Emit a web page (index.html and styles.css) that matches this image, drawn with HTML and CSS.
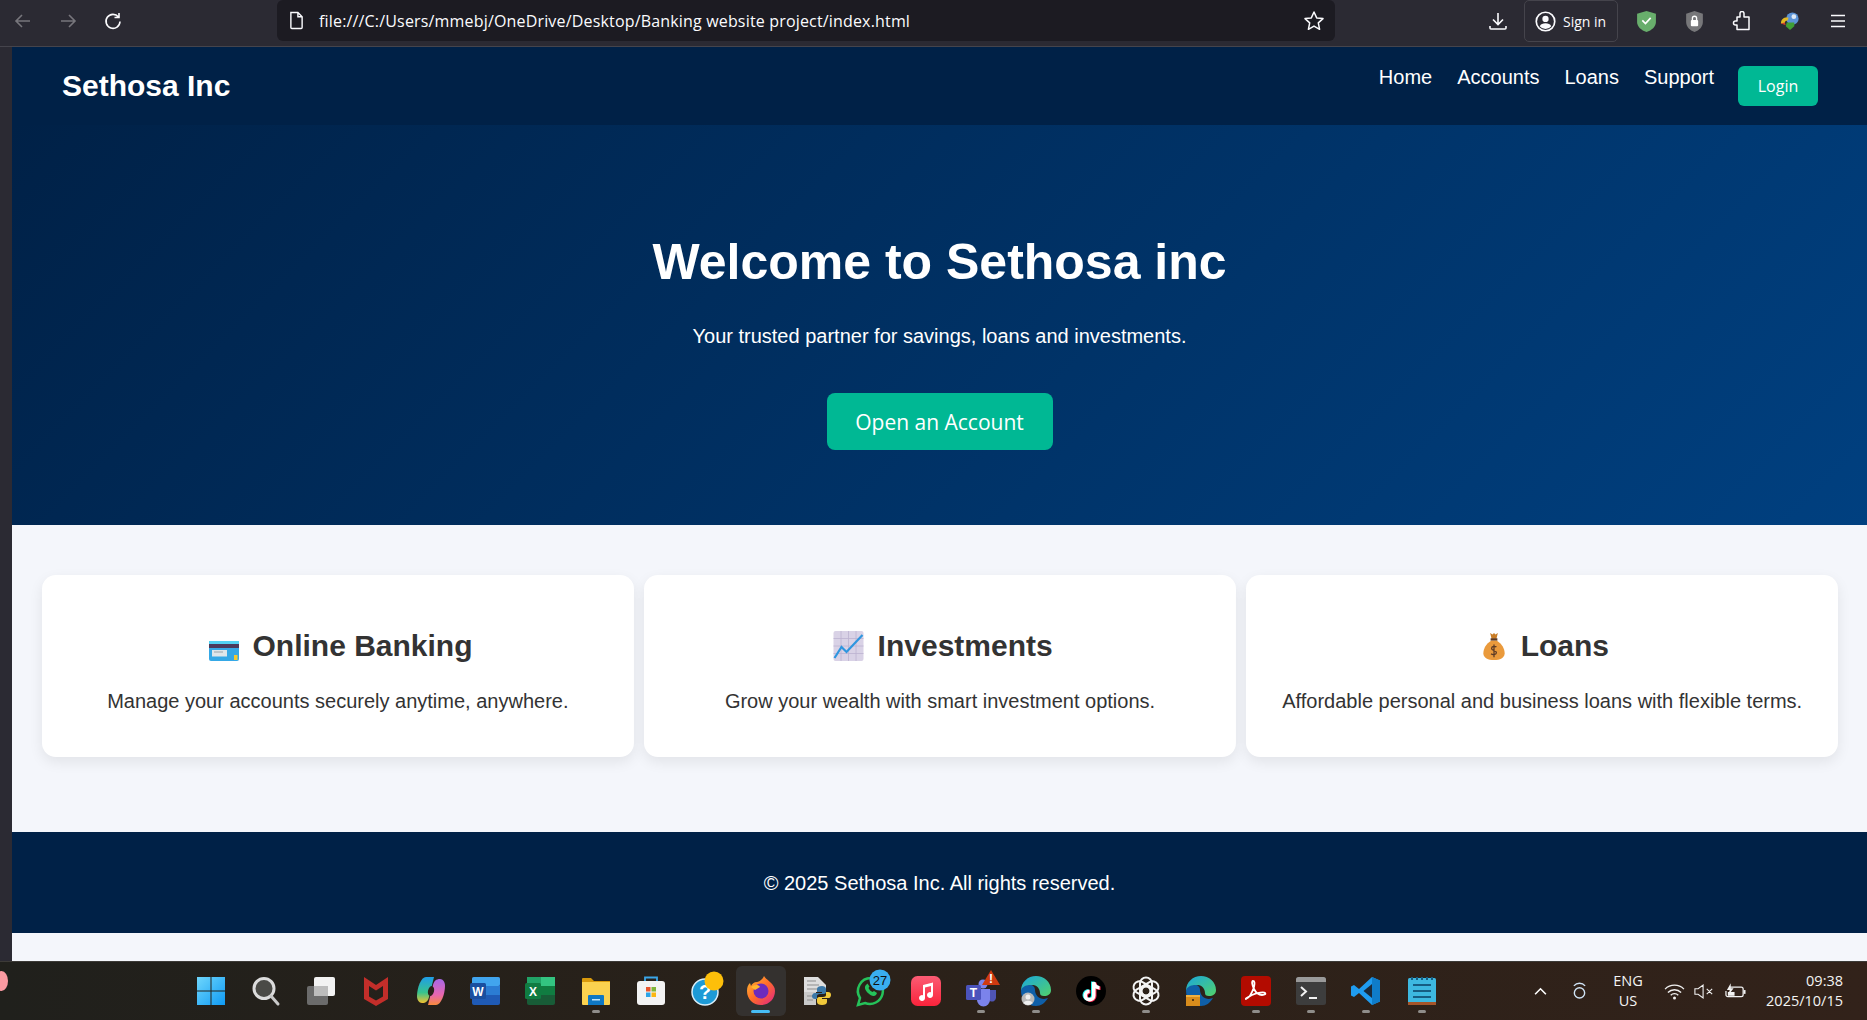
FILE: index.html
```html
<!DOCTYPE html>
<html lang="en">
<head>
    <meta charset="UTF-8">
    <meta name="viewport" content="width=device-width, initial-scale=1.0">
    <title>Sethosa Inc</title>
    <link rel="stylesheet" href="styles.css">
</head>
<body>
    <!-- browser toolbar -->
    <div class="toolbar">
        <div class="tool-cell"><svg class="tool-icon" viewBox="0 0 20 20"><path d="M17 10H3M9 4l-6 6 6 6" stroke="#77767c"/></svg></div>
        <div class="tool-cell"><svg class="tool-icon" viewBox="0 0 20 20"><path d="M3 10h14M11 4l6 6-6 6" stroke="#77767c"/></svg></div>
        <div class="tool-cell"><svg class="tool-icon" viewBox="0 0 20 20"><path d="M15.500 6A7 7 0 1 0 17 10.500M16 2v4.500h-4.500"/></svg></div>
        <div class="url-bar">
            <svg class="doc-icon" viewBox="0 0 16 20"><path d="M2 1.500h7.500L14 6v11.500a1 1 0 0 1-1 1H3a1 1 0 0 1-1-1zM9.500 1.500V6H14" fill="none" stroke="#fbfbfe" stroke-width="1.500"/></svg>
            <span class="url-text">file:///C:/Users/mmebj/OneDrive/Desktop/Banking website project/index.html</span>
            <svg class="star-icon" viewBox="0 0 22 22"><path d="M11 2l2.700 5.900 6.300.7-4.700 4.300 1.300 6.400L11 16.100l-5.600 3.200 1.300-6.400L2 8.600l6.300-.7z" fill="none" stroke="#fbfbfe" stroke-width="1.500" stroke-linejoin="round"/></svg>
        </div>
        <div class="tool-right">
            <div class="tool-cell wide"><svg class="tool-icon" viewBox="0 0 20 20"><path d="M10 2v11M5 8.500l5 5 5-5M2 15v2a1 1 0 0 0 1 1h14a1 1 0 0 0 1-1v-2"/></svg></div>
            <div class="sign-in">
                <svg class="account-icon" viewBox="0 0 20 20"><circle cx="10" cy="10" r="8.800" fill="none" stroke="#fbfbfe" stroke-width="1.600"/><circle cx="10" cy="7.500" r="3" fill="#fbfbfe"/><path d="M4.500 14.500c1-2 3-2.800 5.500-2.800s4.500.8 5.500 2.800a7 7 0 0 1-11 0z" fill="#fbfbfe"/></svg>
                <span>Sign in</span>
            </div>
            <div class="tool-cell wide"><svg class="ext-icon" viewBox="0 0 20 22"><path d="M10 1l9 2.500v8c0 4.500-4 8-9 9.500-5-1.500-9-5-9-9.500v-8z" fill="#68ae6c"/><path d="M6 10l3 3 5-5.500" fill="none" stroke="#fff" stroke-width="1.600"/></svg></div>
            <div class="tool-cell wide"><svg class="ext-icon" viewBox="0 0 20 22"><path d="M10 1l8 2.500v8c0 4.500-3.500 8-8 9.500-4.500-1.500-8-5-8-9.500v-8z" fill="#77777a"/><rect x="6.500" y="9.500" width="7" height="6" rx="1" fill="#fff"/><path d="M8 9.500V8a2 2 0 0 1 4 0v1.500" fill="none" stroke="#fff" stroke-width="1.300"/></svg></div>
            <div class="tool-cell wide"><svg class="tool-icon" viewBox="0 0 20 20"><path d="M8 2.500a2 2 0 0 1 4 0V6h5v12.500H5V14H3.500a2 2 0 0 1 0-4H5V6h3z" stroke-width="1.500" stroke-linejoin="round"/></svg></div>
            <div class="tool-cell wide"><svg class="ext-icon" viewBox="0 0 22 22"><circle cx="13" cy="8" r="6.500" fill="#5c93d6"/><circle cx="14.500" cy="6" r="2.500" fill="#dfe9f5"/><path d="M1 13c0-5 4-7 8-6l-1 3c-2 0-3 1-3 3z" fill="#e2b822"/><path d="M1 13l4-1 1 3z" fill="#d0402c"/><path d="M7 12h8v4l-4.500 4L6 16z" fill="#3f9e35"/></svg></div>
            <div class="tool-cell wide"><svg class="tool-icon" viewBox="0 0 20 20"><path d="M3 4.500h14M3 10h14M3 15.500h14"/></svg></div>
        </div>
    </div>

    <div class="viewport">
        <div class="gutter"></div>
        <div class="page">
            <nav class="navbar">
                <div class="logo">Sethosa Inc</div>
                <div class="nav-right">
                    <ul class="nav-links">
                        <li><a href="#">Home</a></li>
                        <li><a href="#">Accounts</a></li>
                        <li><a href="#">Loans</a></li>
                        <li><a href="#">Support</a></li>
                    </ul>
                    <button class="btn btn-login">Login</button>
                </div>
            </nav>

            <section class="hero">
                <h1>Welcome to Sethosa inc</h1>
                <p>Your trusted partner for savings, loans and investments.</p>
                <button class="btn btn-open">Open an Account</button>
            </section>

            <section class="features">
                <div class="card">
                    <h3>
                        <svg class="emoji emoji-card" viewBox="0 0 30 20"><rect width="30" height="20" rx="2" fill="#35a8e6"/><rect width="30" height="3" fill="#53d2f3"/><rect y="3" width="30" height="4" fill="#4b3a5c"/><rect x="3" y="9" width="15" height="6.500" fill="#dfe6ea"/><path d="M5 11h9" stroke="#9aa4aa"/><rect x="25" y="14" width="3.500" height="5" fill="#f5c92f"/></svg>
                        Online Banking
                    </h3>
                    <p>Manage your accounts securely anytime, anywhere.</p>
                </div>
                <div class="card">
                    <h3>
                        <svg class="emoji emoji-chart" viewBox="0 0 30 30"><rect width="30" height="30" rx="2" fill="#d9d2e6"/><path d="M7.500 0v30M15 0v30M22.500 0v30M0 7.500h30M0 15h30M0 22.500h30" stroke="#bdb3d0" stroke-width=".8"/><path d="M1 27l7-11 5 5L29 4" fill="none" stroke="#2f96df" stroke-width="2.200"/></svg>
                        Investments
                    </h3>
                    <p>Grow your wealth with smart investment options.</p>
                </div>
                <div class="card">
                    <h3>
                        <svg class="emoji emoji-bag" viewBox="0 0 24 30"><path d="M8 1l2.500 1.500L12 1l1.500 1.500L16 1l-1.500 6h-5z" fill="#c97d26"/><rect x="8.500" y="6.500" width="7" height="2.500" fill="#5b3a26"/><path d="M9 9C4 12 1 17 1 22c0 5 5 7 11 7s11-2 11-7c0-5-3-10-8-13z" fill="#ea9a3c"/><path d="M14.500 15.500c-1-1-5-1-5 1.500s5 1.500 5 4.500c0 2-4 2.500-5.500 1M12 13v13" fill="none" stroke="#5b3a26" stroke-width="1.300"/></svg>
                        Loans
                    </h3>
                    <p>Affordable personal and business loans with flexible terms.</p>
                </div>
            </section>

            <footer class="footer">© 2025 Sethosa Inc. All rights reserved.</footer>
        </div>
    </div>

    <!-- windows taskbar -->
    <div class="taskbar">
        <div class="notify-blob"></div>
        <div class="apps">
            <div class="app"><svg viewBox="0 0 30 30"><defs><linearGradient id="win" x1="0" y1="0" x2="1" y2="1"><stop offset="0" stop-color="#6fd6fb"/><stop offset="1" stop-color="#0f9bf5"/></linearGradient></defs><path d="M1 1h13.500v13.500H1zM15.500 1H29v13.500H15.500zM1 15.500h13.500V29H1zM15.500 15.500H29V29H15.500z" fill="url(#win)"/></svg></div>
            <div class="app"><svg viewBox="0 0 30 30"><circle cx="13" cy="12.500" r="10" fill="#4a4a46" stroke="#dcdcdc" stroke-width="3"/><path d="M20 20l7 8" stroke="#c9c9c9" stroke-width="3" stroke-linecap="round"/></svg></div>
            <div class="app"><svg viewBox="0 0 30 30"><rect x="1" y="10" width="21" height="19" rx="2" fill="#6b6b6b"/><rect x="8" y="1" width="21" height="19" rx="2" fill="#f2f2f2"/><rect x="8" y="10" width="14" height="10" fill="#bcbcbc"/></svg></div>
            <div class="app"><svg viewBox="0 0 30 30"><path d="M3 1l12 8 12-8v22l-12 7-12-7zM8 10v10.500l7 4 7-4V10l-7 4.500z" fill="#c32e2a" fill-rule="evenodd"/></svg></div>
            <div class="app"><svg viewBox="0 0 30 30"><defs><linearGradient id="cop1" x1="0" y1="0" x2="0" y2="1"><stop offset="0" stop-color="#1f9de8"/><stop offset=".6" stop-color="#38c48d"/><stop offset="1" stop-color="#f3c12f"/></linearGradient><linearGradient id="cop2" x1="0" y1="0" x2="0" y2="1"><stop offset="0" stop-color="#a668e8"/><stop offset=".6" stop-color="#e866b0"/><stop offset="1" stop-color="#f78a3c"/></linearGradient></defs><path d="M10 1h8l-5 20c-1 4-3 6-7 6-3 0-5-3-5-7 0-8 4-19 9-19z" fill="url(#cop1)"/><path d="M20 29h-8l5-20c1-4 3-6 7-6 3 0 5 3 5 7 0 8-4 19-9 19z" fill="url(#cop2)"/><ellipse cx="15" cy="15" rx="3" ry="5" fill="#2a2119" transform="rotate(14 15 15)"/></svg></div>
            <div class="app"><svg viewBox="0 0 30 30"><rect x="1" y="1" width="28" height="28" rx="2" fill="#1f5ab5"/><rect x="1" y="1" width="28" height="9" rx="2" fill="#41a5ee"/><rect x="1" y="10" width="28" height="9" fill="#2b7cd3"/><rect x="-1" y="7" width="16" height="16" rx="1.500" fill="#1a4f9f"/><text x="7" y="19.500" class="app-letter">W</text></svg></div>
            <div class="app"><svg viewBox="0 0 30 30"><rect x="1" y="1" width="28" height="28" rx="2" fill="#185c37"/><rect x="15" y="1" width="14" height="9" fill="#33c481"/><rect x="1" y="1" width="14" height="9" fill="#21a366"/><rect x="15" y="10" width="14" height="9" fill="#107c41"/><rect x="-1" y="7" width="16" height="16" rx="1.500" fill="#107c41"/><text x="7" y="19.500" class="app-letter">X</text></svg></div>
            <div class="app pip"><svg viewBox="0 0 30 30"><path d="M1 3a1 1 0 0 1 1-1h8l3 3h16v4H1z" fill="#d99a0c"/><path d="M1 6h28v22a1 1 0 0 1-1 1H2a1 1 0 0 1-1-1z" fill="#fbd24f"/><path d="M7 20a1 1 0 0 1 1-1h14a1 1 0 0 1 1 1v9H7z" fill="#0f78c4"/><rect x="11" y="23" width="8" height="1.500" fill="#bfe4fb"/></svg></div>
            <div class="app"><svg viewBox="0 0 30 30"><path d="M9 6V1.500h12V6" fill="none" stroke="#3aa6e8" stroke-width="1.800"/><rect x="1" y="5" width="28" height="24" rx="3" fill="#f3f3f3"/><rect x="10" y="11" width="4.500" height="4.500" fill="#e8542c"/><rect x="15.500" y="11" width="4.500" height="4.500" fill="#7fb53a"/><rect x="10" y="16.500" width="4.500" height="4.500" fill="#2ba4e8"/><rect x="15.500" y="16.500" width="4.500" height="4.500" fill="#fbb713"/></svg></div>
            <div class="app"><svg viewBox="0 0 30 30"><circle cx="14" cy="16" r="13" fill="#1d9ad6" stroke="#d9eef9" stroke-width="1.500"/><text x="14" y="23" class="app-help">?</text><circle cx="23" cy="5" r="9.500" fill="#fdbf0a"/></svg></div>
            <div class="app active"><svg viewBox="0 0 30 30"><defs><linearGradient id="fox" x1="0" y1="0" x2="1" y2="1"><stop offset="0" stop-color="#ffc02f"/><stop offset=".5" stop-color="#ff6a2a"/><stop offset="1" stop-color="#e0218a"/></linearGradient></defs><path d="M15 29C7 29 1 23 1 15c0-4 1-6 3-8l1 3c1-2 3-4 6-4 0 0 5-1 7-6 2 3 3 3 6 6 3 3 5 5 5 9 0 8-6 14-14 14z" fill="url(#fox)"/><circle cx="15" cy="15" r="7.500" fill="#6b2bbd"/><path d="M5 11c3-2 7-3 9 0l-5 3z" fill="#ffb62e"/></svg></div>
            <div class="app"><svg viewBox="0 0 30 30"><path d="M3 1h14l8 8v7H3z" fill="#dedede"/><path d="M3 16h12v13H3z" fill="#c9c9c9"/><path d="M6 5h9M6 9h12M6 13h12M6 20h6M6 24h6" stroke="#8d8d8d"/><path d="M21 10c-3 0-5 1-5 3v3h5v1h-7c-2 0-3 2-3 3 0 2 1 3 3 3h2v-3c0-1 1-2 3-2h4c1 0 2-1 2-2v-3c0-2-2-3-4-3z" fill="#3b78a8"/><path d="M21 29c3 0 5-1 5-3v-3h-5v-1h7c1 0 2-2 2-3 0-2-1-3-3-3h-2v3c0 1-1 2-3 2h-4c-1 0-2 1-2 2v3c0 2 2 3 5 3z" fill="#f1c93b"/></svg></div>
            <div class="app"><svg viewBox="0 0 30 30"><path d="M15 2a13 13 0 0 0-11 20L2 29l7-2A13 13 0 1 0 15 2z" fill="none" stroke="#25c25a" stroke-width="2.500"/><path d="M10 9c-2 2-1 5 2 8s6 4 8 2l1-2-3-2-1.500 1c-2-1-3-2-4-4l1-1.500-2-3z" fill="#25c25a"/><circle cx="24" cy="4" r="10.500" fill="#39aef0"/><text x="24" y="9" class="app-badge">27</text></svg></div>
            <div class="app"><svg viewBox="0 0 30 30"><defs><linearGradient id="music" x1="0" y1="0" x2="0" y2="1"><stop offset="0" stop-color="#fb5c74"/><stop offset="1" stop-color="#fa233b"/></linearGradient></defs><rect width="30" height="30" rx="6.500" fill="url(#music)"/><path d="M12 9l10-2.500V19a3 3 0 1 1-2-2.800V10l-6 1.500V22a3 3 0 1 1-2-2.800z" fill="#fff"/></svg></div>
            <div class="app pip"><svg viewBox="0 0 30 30"><circle cx="17" cy="8" r="4.500" fill="#7b83eb"/><path d="M11 13h13v11a6.500 6.500 0 0 1-13 0z" fill="#7b83eb"/><path d="M24 14h6v8a4 4 0 0 1-6 3z" fill="#4f55b5"/><rect y="9" width="15" height="15" rx="1.500" fill="#4b53bc"/><text x="7.500" y="20.500" class="app-letter">T</text><path d="M25 -6l9 15H16z" fill="#cf3a10"/><text x="25" y="6.500" class="app-warn">!</text></svg></div>
            <div class="app pip"><svg viewBox="0 0 30 30"><defs><linearGradient id="edge1" x1="0" y1="0" x2="1" y2="1"><stop offset="0" stop-color="#1aa7dd"/><stop offset="1" stop-color="#52d26b"/></linearGradient></defs><path d="M0 15C0 6 7 0 15 0c8 0 15 6 15 14 0 4-3 6-7 6-3 0-4-1-4-3 0-4-3-8-7-8-5 0-10 3-12 6z" fill="url(#edge1)"/><path d="M0 15c0-3 4-6 9-6 3 0 5 2 5 5 0 5 4 9 9 9l4-1c-3 5-7 8-12 8C6 30 0 23 0 15z" fill="#0f5fa8"/><circle cx="7" cy="23" r="6.500" fill="#b9b9b9"/><circle cx="7" cy="21" r="2.500" fill="#efefef"/><path d="M2.500 27c1-3 8-3 9 0a6 6 0 0 1-9 0z" fill="#efefef"/></svg></div>
            <div class="app"><svg viewBox="0 0 30 30"><circle cx="15" cy="15" r="15" fill="#000"/><path d="M16 6h3.500c.3 2.500 2 4 4 4v3.500c-1.500 0-3-.5-4-1.200v7.200a6 6 0 1 1-6-6v3.500a2.500 2.500 0 1 0 2.500 2.500z" fill="#25f4ee" transform="translate(-1 -.6)"/><path d="M16 6h3.500c.3 2.500 2 4 4 4v3.500c-1.500 0-3-.5-4-1.200v7.200a6 6 0 1 1-6-6v3.500a2.500 2.500 0 1 0 2.500 2.500z" fill="#fe2c55" transform="translate(1 .6)"/><path d="M16 6h3.500c.3 2.500 2 4 4 4v3.500c-1.500 0-3-.5-4-1.200v7.200a6 6 0 1 1-6-6v3.500a2.500 2.500 0 1 0 2.500 2.500z" fill="#fff"/></svg></div>
            <div class="app pip"><svg viewBox="0 0 30 30"><g fill="none" stroke="#f4f4f4" stroke-width="2"><rect x="9" y="1.500" width="12" height="18" rx="6"/><rect x="9" y="1.500" width="12" height="18" rx="6" transform="rotate(60 15 15)"/><rect x="9" y="1.500" width="12" height="18" rx="6" transform="rotate(120 15 15)"/><rect x="9" y="1.500" width="12" height="18" rx="6" transform="rotate(180 15 15)"/><rect x="9" y="1.500" width="12" height="18" rx="6" transform="rotate(240 15 15)"/><rect x="9" y="1.500" width="12" height="18" rx="6" transform="rotate(300 15 15)"/></g></svg></div>
            <div class="app"><svg viewBox="0 0 30 30"><defs><linearGradient id="edge2" x1="0" y1="0" x2="1" y2="1"><stop offset="0" stop-color="#1aa7dd"/><stop offset="1" stop-color="#52d26b"/></linearGradient></defs><path d="M0 15C0 6 7 0 15 0c8 0 15 6 15 14 0 4-3 6-7 6-3 0-4-1-4-3 0-4-3-8-7-8-5 0-10 3-12 6z" fill="url(#edge2)"/><path d="M0 15c0-3 4-6 9-6 3 0 5 2 5 5 0 5 4 9 9 9l4-1c-3 5-7 8-12 8C6 30 0 23 0 15z" fill="#0f5fa8"/><rect y="19" width="14" height="11" fill="#d88c1c"/><rect y="19" width="14" height="2" fill="#f0b040"/><rect x="6" y="23" width="2" height="2" fill="#5b3a10"/></svg></div>
            <div class="app pip"><svg viewBox="0 0 30 30"><rect width="30" height="30" rx="4" fill="#b30b00"/><path d="M5 23c3-1 6-6 8-12 1-4 .5-6-1-6-1.500 0-1 4 1 8 2 4 5 6 8 6 3 0 4-1 3-2s-7-.5-13 2c-4 2-7 4-6 4z" fill="none" stroke="#fff" stroke-width="1.800"/></svg></div>
            <div class="app pip"><svg viewBox="0 0 30 30"><rect y="1" width="30" height="28" rx="2.500" fill="#3d3d3d"/><path d="M0 3.500A2.500 2.500 0 0 1 2.500 1h25A2.500 2.500 0 0 1 30 3.500V6H0z" fill="#9a9a9a"/><path d="M5 11l5 4.500L5 20" fill="none" stroke="#f2f2f2" stroke-width="2"/><path d="M13 22h8" stroke="#f2f2f2" stroke-width="2"/></svg></div>
            <div class="app pip"><svg viewBox="0 0 30 30"><path d="M21 1l8 3.500v21L21 29 8 17l-5 4-3-1.500V10.500L3 9l5 4z" fill="#1f9cf0"/><path d="M21 8v14l-8.500-7z" fill="#1b2a3a"/><path d="M21 1l8 3.500v21L21 29z" fill="#0f7cc9"/></svg></div>
            <div class="app pip"><svg viewBox="0 0 30 30"><rect x="1" y="2" width="28" height="27" rx="1.500" fill="#3db8e0"/><rect x="1" y="26" width="28" height="3" fill="#a5552a"/><path d="M5 1v3M10 1v3M15 1v3M20 1v3M25 1v3" stroke="#165d82" stroke-width="2"/><path d="M6 9h18M6 15h18M6 21h18" stroke="#165d82" stroke-width="2"/></svg></div>
        </div>
        <div class="tray">
            <svg class="tray-chevron" viewBox="0 0 16 10"><path d="M2 8l6-6 6 6" fill="none" stroke="#fff" stroke-width="1.800"/></svg>
            <svg class="tray-ring" viewBox="0 0 16 18"><path d="M2 3.500a8 8 0 0 1 12 0" fill="none" stroke="#cfe3f5" stroke-width="1.500"/><circle cx="8" cy="11" r="5.500" fill="none" stroke="#cfe3f5" stroke-width="1.500"/></svg>
            <div class="tray-lang"><span>ENG</span><span>US</span></div>
            <svg class="tray-wifi" viewBox="0 0 22 18"><path d="M1 6.500a14 14 0 0 1 20 0M4 10a10 10 0 0 1 14 0M7 13a5.500 5.500 0 0 1 8 0" fill="none" stroke="#f2f2f2" stroke-width="1.400"/><circle cx="11" cy="16" r="1.600" fill="#f2f2f2"/></svg>
            <svg class="tray-sound" viewBox="0 0 22 16"><path d="M1 5h3.500L10 1v14l-5.500-4H1z M14 5l6 6M20 5l-6 6" fill="none" stroke="#f2f2f2" stroke-width="1.200"/></svg>
            <svg class="tray-battery" viewBox="0 0 22 16"><path d="M5 4h12a2 2 0 0 1 2 2v6a2 2 0 0 1-2 2H3a2 2 0 0 1-2-2V8" fill="none" stroke="#f2f2f2" stroke-width="1.300"/><rect x="19.500" y="7" width="2" height="4" fill="#f2f2f2"/><path d="M6 0L2 7h3l-2 6 6-8H6z" fill="#f2f2f2"/><rect x="3" y="9" width="7" height="4" fill="#f2f2f2"/></svg>
            <div class="tray-clock"><span>09:38</span><span>2025/10/15</span></div>
        </div>
    </div>
</body>
</html>
```

FILE: styles.css
```css
* {
    box-sizing: border-box;
}
body {
    margin: 0;
    height: 1020px;
    overflow: hidden;
    display: flex;
    flex-direction: column;
    font-family: "Liberation Sans", Arial, sans-serif;
    background: #2b2a33;
}

/* browser toolbar */
.toolbar {
    height: 47px;
    flex: none;
    display: flex;
    background: #2b2a33;
    border-bottom: 1px solid #45444c;
    font-family: "Open Sans", "Noto Sans", sans-serif;
    color: #fbfbfe;
}
.tool-cell {
    width: 45px;
    height: 42px;
    display: flex;
    align-items: center;
    justify-content: center;
}
.tool-cell.wide {
    width: 48px;
}
.tool-icon {
    width: 20px;
    height: 20px;
    fill: none;
    stroke: #fbfbfe;
    stroke-width: 1.6;
}
.ext-icon {
    width: 21px;
    height: 23px;
}
.url-bar {
    width: 1058px;
    height: 41px;
    margin-left: 142px;
    padding: 0 10px 0 12px;
    display: flex;
    align-items: center;
    background: #1c1b22;
    border-radius: 6px;
}
.doc-icon {
    width: 15px;
    height: 19px;
}
.url-text {
    margin-left: 15px;
    font-size: 16px;
    letter-spacing: 0.17px;
}
.star-icon {
    width: 22px;
    height: 22px;
    margin-left: auto;
}
.tool-right {
    margin-left: auto;
    padding-right: 5px;
    display: flex;
}
.sign-in {
    width: 94px;
    height: 42px;
    margin: 0 4px 0 2px;
    display: flex;
    align-items: center;
    gap: 7px;
    padding-left: 10px;
    border: 1px solid #45444c;
    border-radius: 5px;
    font-size: 14px;
}
.account-icon {
    width: 21px;
    height: 21px;
    flex: none;
}

/* the page itself */
.viewport {
    flex: 1;
    display: flex;
    min-height: 0;
}
.gutter {
    width: 12px;
    flex: none;
    background: #2b2a33;
}
.page {
    flex: 1;
    background: #f4f6fb;
}
.navbar {
    height: 78px;
    padding: 0 49px 0 50px;
    display: flex;
    align-items: center;
    justify-content: space-between;
    background: #002147;
    color: white;
}
.logo {
    font-size: 30px;
    font-weight: bold;
}
.nav-right {
    display: flex;
    align-items: center;
    gap: 24px;
}
.nav-links {
    list-style: none;
    margin: 0 0 18px;
    padding: 0;
    display: flex;
    gap: 25px;
}
.nav-links a {
    color: white;
    text-decoration: none;
    font-size: 20px;
}
.btn {
    border: none;
    color: white;
    background: #00b894;
    font-family: "Open Sans", "Noto Sans", sans-serif;
    cursor: pointer;
}
.btn-login {
    width: 80px;
    height: 40px;
    border-radius: 6px;
    font-size: 16px;
}
.hero {
    height: 400px;
    padding-top: 104px;
    text-align: center;
    color: white;
    background: linear-gradient(135deg, #002147, #004080);
}
.hero h1 {
    margin: 0;
    font-size: 50px;
    line-height: 66px;
}
.hero p {
    margin: 30px 0 46px;
    font-size: 20px;
    line-height: 22px;
}
.btn-open {
    width: 226px;
    height: 57px;
    border-radius: 8px;
    font-size: 21px;
}
.features {
    padding: 50px 29px 75px 30px;
    display: grid;
    grid-template-columns: repeat(3, 1fr);
    gap: 10.5px;
}
.card {
    height: 182px;
    padding-top: 49px;
    text-align: center;
    background: white;
    border-radius: 14px;
    box-shadow: 0 5px 14px rgba(0, 0, 0, 0.08);
    color: #333;
}
.card h3 {
    margin: 0;
    padding-left: 6px;
    font-size: 30px;
    line-height: 44px;
}
.emoji {
    margin-right: 5px;
    vertical-align: -5px;
}
.emoji-card {
    width: 30px;
    height: 20px;
}
.emoji-chart {
    width: 31px;
    height: 30px;
}
.emoji-bag {
    width: 26px;
    height: 29px;
}
.card p {
    margin: 22px 0 0;
    font-size: 20px;
    line-height: 22px;
}
.footer {
    height: 101px;
    padding-top: 2px;
    display: flex;
    align-items: center;
    justify-content: center;
    background: #002147;
    color: white;
    font-size: 20px;
}

/* windows taskbar */
.taskbar {
    height: 59px;
    flex: none;
    position: relative;
    display: flex;
    align-items: center;
    background: linear-gradient(90deg, #20201c, #2a2119 45%, #32221a);
    border-top: 1px solid #3c3a37;
    color: #f4f4f4;
    font-family: "Open Sans", "Noto Sans", sans-serif;
    overflow: hidden;
}
.notify-blob {
    position: absolute;
    left: -5px;
    top: 9px;
    width: 13px;
    height: 20px;
    border-radius: 50%;
    background: #fb9aa2;
}
.apps {
    margin-left: 183px;
    display: flex;
}
.app {
    position: relative;
    width: 55.05px;
    height: 50px;
    display: flex;
    align-items: center;
    justify-content: center;
    border-radius: 6px;
}
.app svg {
    width: 30px;
    height: 30px;
    overflow: visible;
}
.app.pip::after, .app.active::after {
    content: "";
    position: absolute;
    left: 50%;
    bottom: 3px;
    width: 8px;
    height: 3px;
    margin-left: -4px;
    border-radius: 2px;
    background: #8f8d8a;
}
.app.active {
    width: 50px;
    margin: 0 2.5px;
    background: #34312f;
}
.app.active::after {
    width: 19px;
    margin-left: -9.5px;
    background: #47bdf5;
}
.app-letter {
    font-family: "Liberation Sans", Arial, sans-serif;
    font-size: 12px;
    font-weight: bold;
    fill: white;
    text-anchor: middle;
}
.app-help {
    font-family: "Liberation Sans", Arial, sans-serif;
    font-size: 20px;
    font-weight: bold;
    fill: white;
    text-anchor: middle;
}
.app-badge {
    font-family: "Liberation Sans", Arial, sans-serif;
    font-size: 13px;
    fill: #111;
    text-anchor: middle;
}
.app-warn {
    font-family: "Liberation Sans", Arial, sans-serif;
    font-size: 12px;
    font-weight: bold;
    fill: white;
    text-anchor: middle;
}
.tray {
    margin-left: 84px;
    display: flex;
    align-items: center;
    font-size: 14.5px;
}
.tray-chevron {
    width: 15px;
    height: 9px;
}
.tray-ring {
    width: 15px;
    height: 18px;
    margin-left: 24px;
}
.tray-lang {
    width: 50px;
    margin-left: 16px;
    display: flex;
    flex-direction: column;
    align-items: center;
    line-height: 20px;
}
.tray-wifi {
    width: 21px;
    height: 17px;
    margin-left: 11px;
}
.tray-sound {
    width: 20px;
    height: 15px;
    margin-left: 9px;
}
.tray-battery {
    width: 21px;
    height: 16px;
    margin-left: 11px;
}
.tray-clock {
    width: 84px;
    margin-left: 13px;
    display: flex;
    flex-direction: column;
    align-items: flex-end;
    line-height: 20px;
}
```
